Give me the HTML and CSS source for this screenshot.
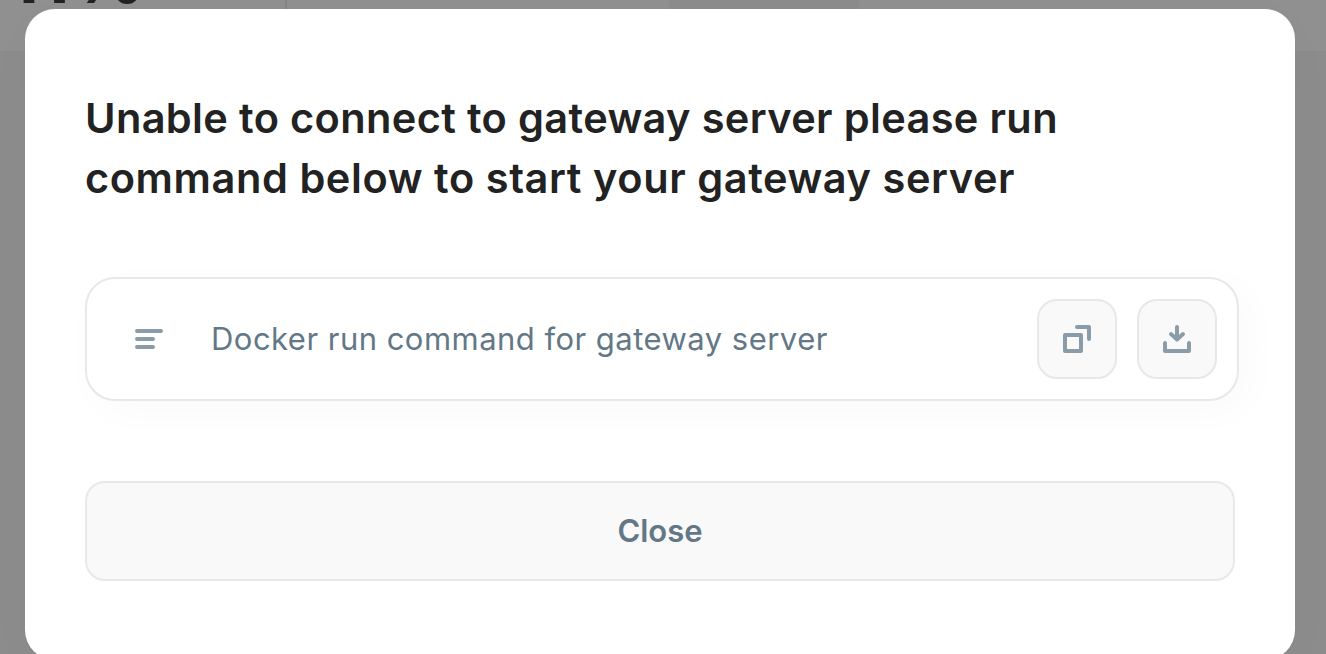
FILE: index.html
```html
<!DOCTYPE html>
<html lang="en">
<head>
<meta charset="utf-8">
<title>Gateway server</title>
<link rel="stylesheet" href="styles.css">
</head>
<body>
<div class="page">
  <div class="page-card">
    <div class="stat"><span class="stat-value">11<span class="percent">%</span></span></div>
    <div class="stat-next"></div>
    <div class="stat-band"></div>
  </div>
</div>
<div class="modal" role="dialog">
  <h1 class="title"><span class="line line-one">Unable to connect to gateway server please run</span> <span class="line line-two">command below to start your gateway server</span></h1>
  <div class="command">
    <svg class="icon" width="28" height="28" viewBox="0 0 28 28"><path d="M2 6H26M2 14H18M2 22H18"/></svg>
    <span class="label">Docker run command for gateway server</span>
    <button class="tool" aria-label="Copy"><svg class="icon" width="28" height="28" viewBox="0 0 28 28"><path d="M2 10H18V26H2ZM14 2H26V14"/></svg></button>
    <button class="tool" aria-label="Download"><svg class="icon" width="28" height="28" viewBox="0 0 28 28"><path d="M2 18V26H26V18M14 2V14M8 9L14 14.5L20 9"/></svg></button>
  </div>
  <button class="close"><span>Close</span></button>
</div>
</body>
</html>
```
FILE: styles.css
```css
* { box-sizing: border-box; }
body { margin: 0; height: 654px; overflow: hidden; background: #8c8c8c; font-family: Inter, sans-serif; }
.page { height: 654px; overflow: hidden; }
.page-card { display: flex; height: 52px; background: #909090; border-bottom: 1px solid #8a8a8a; }
.stat { width: 287px; height: 52px; padding-left: 8px; border-right: 2px solid #858585; color: #222; font-size: 72px; font-weight: 700; line-height: 64px; }
.stat-value { display: block; margin-top: -55px; letter-spacing: -.5px; }
.percent { margin-left: 3px; }
.stat-next { width: 382px; }
.stat-band { width: 190px; background: #8c8c8c; }
.modal { position: absolute; left: 25px; top: 9px; width: 1270px; height: 651px; padding: 79px 56px 0 60px; border-radius: 30px; background: #fff; box-shadow: 0 10px 60px rgba(0,0,0,.02); }
.title { margin: 0 0 69px; color: #222; font-size: 41.5px; font-weight: 600; line-height: 60px; }
.line { display: block; white-space: nowrap; width: max-content; }
.line-one { letter-spacing: .36px; }
.line-two { letter-spacing: .58px; }
.command { display: flex; align-items: center; width: 1154px; height: 124px; padding: 0 20px 0 48px; border: 2px solid #e8e8e8; border-radius: 30px; background: #fff; box-shadow: 10px 10px 40px rgba(0,0,0,.025); }
.icon { display: block; fill: none; stroke: #8a9ca8; stroke-width: 4; stroke-linecap: round; stroke-linejoin: round; }
.label { margin: 0 auto 0 48px; padding-bottom: 2px; color: #637887; font-size: 31px; font-weight: 400; letter-spacing: .47px; white-space: nowrap; }
.tool { display: flex; align-items: center; justify-content: center; width: 80px; height: 80px; padding: 0; border: 2px solid #e8e8e8; border-radius: 20px; background: #f9f9f9; }
.tool + .tool { margin-left: 20px; }
.close { display: flex; align-items: center; justify-content: center; width: 1150px; height: 100px; margin-top: 80px; padding: 0 0 2px; border: 2px solid #e8e8e8; border-radius: 20px; background: #f9f9f9; color: #637887; font: 600 31px Inter, sans-serif; }
```
